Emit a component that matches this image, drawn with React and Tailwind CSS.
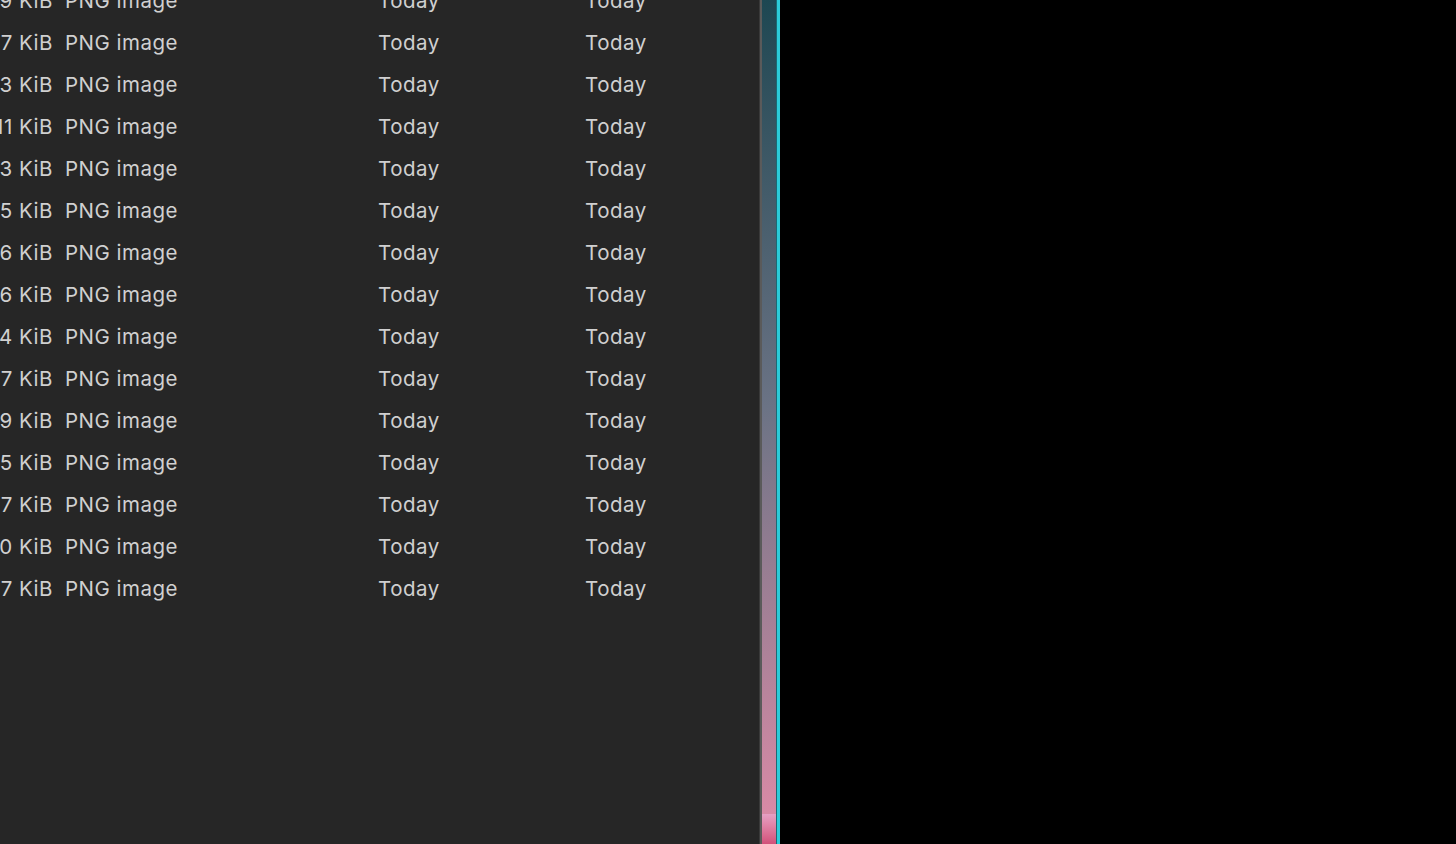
const sizes = ['209', '247', '193', '111', '183', '215', '186', '226', '244', '197', '219', '205', '187', '230', '217'];

export default function App() {
  return (
    <div className="flex h-[844px] w-[1456px] overflow-hidden bg-black">
      <div className="relative h-full w-[759px] overflow-hidden bg-[#262626]" style={{ fontFamily: 'Inter, "Noto Sans", sans-serif' }}>
        <div className="-mt-[20px] flex flex-col">
          {sizes.map((s, i) => (
            <div key={i} className="flex h-[42px] items-center text-[20.5px] tracking-[0.5px] text-[#d0d0d0] whitespace-nowrap">
              <div className="-ml-[50px] w-[103px] shrink-0 text-right">{s} KiB</div>
              <div className="ml-[12px] w-[313px] shrink-0">PNG image</div>
              <div className="w-[207px] shrink-0">Today</div>
              <div>Today</div>
            </div>
          ))}
        </div>
      </div>
      <div className="flex h-full">
        <div className="w-[1px] bg-[#3a3a3a]" />
        <div className="w-[2px] bg-[#5a5a5a]" />
        <div className="flex w-[14px] flex-col">
          <div className="flex-1 bg-gradient-to-b from-[#1d4752] via-[#6b7385] via-50% to-[#d88aa6]" />
          <div className="h-[30px] bg-gradient-to-b from-[#e6a0c4] to-[#d2507a]" />
        </div>
        <div className="w-[1px] bg-[#1a6a75]" />
        <div className="w-[3px] bg-[#2ccbd9]" />
      </div>
    </div>
  );
}
